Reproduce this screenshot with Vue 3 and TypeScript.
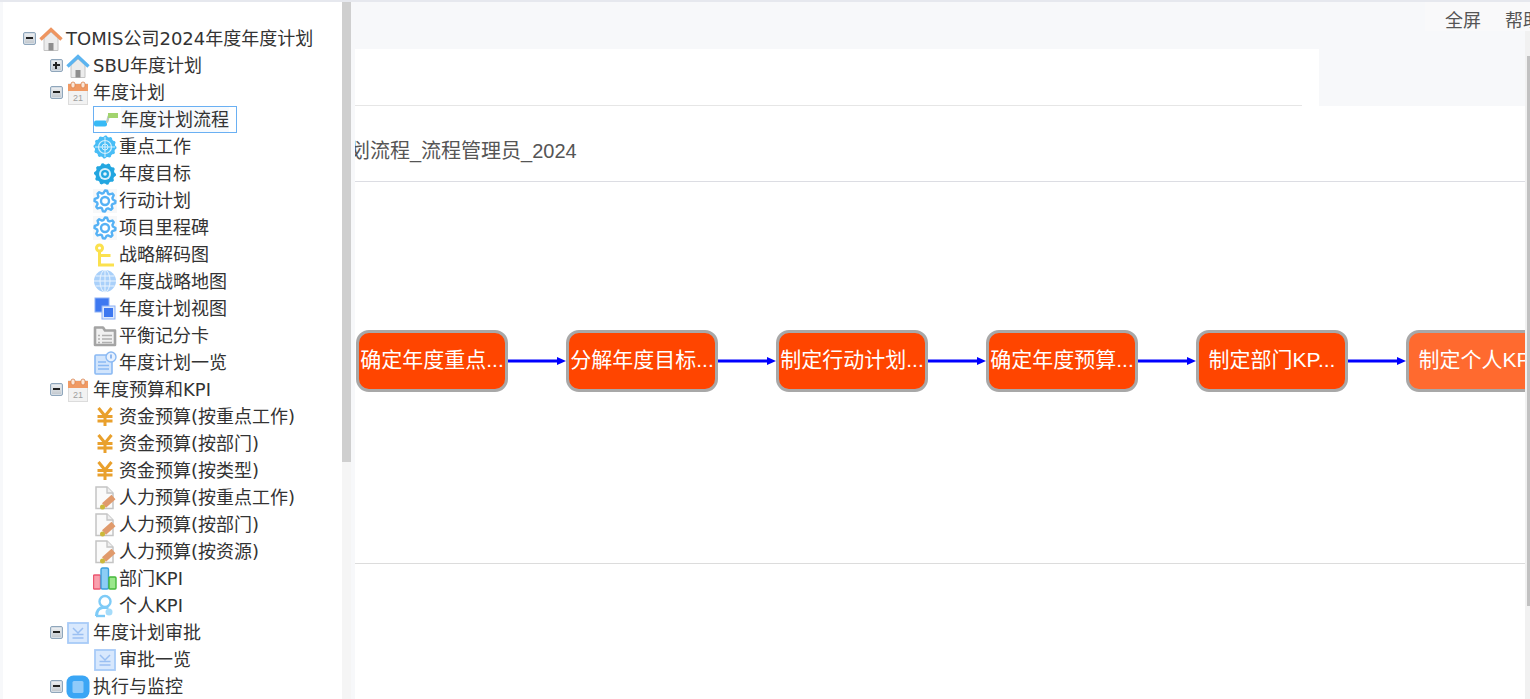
<template>
  <div class="page">
    <svg class="defs" aria-hidden="true">
      <symbol id="i-home-o" viewBox="0 0 24 24">
        <path d="M5 11v12.500h14V11L12 5z" fill="#ececec" stroke="#c4c4c4" />
        <path d="M9.500 23.500v-7.500h5v7.500z" fill="#8e8e8e" />
        <path d="M1.500 12.500 12 2.500l10.500 10" fill="none" stroke="#ee9560" stroke-width="3.400" />
      </symbol>
      <symbol id="i-home-b" viewBox="0 0 24 24">
        <path d="M5 11v12.500h14V11L12 5z" fill="#ececec" stroke="#c4c4c4" />
        <path d="M9.500 23.500v-7.500h5v7.500z" fill="#8e8e8e" />
        <path d="M1.500 12.500 12 2.500l10.500 10" fill="none" stroke="#5cb4f0" stroke-width="3.400" />
      </symbol>
      <symbol id="i-cal" viewBox="0 0 24 24">
        <rect x="2.500" y="3" width="19" height="20.500" fill="#f2f2f2" stroke="#dcdcdc" />
        <rect x="2" y="3" width="20" height="7" fill="#f09a64" />
        <rect x="5" y="1" width="4" height="6" rx="2" fill="#fbe6d8" stroke="#d9834e" stroke-width=".8" />
        <rect x="15" y="1" width="4" height="6" rx="2" fill="#fbe6d8" stroke="#d9834e" stroke-width=".8" />
        <text x="12" y="20" text-anchor="middle" font-size="9" font-family="Liberation Sans" fill="#a0a0a0">21</text>
      </symbol>
      <symbol id="i-flow" viewBox="0 0 24 24">
        <rect x="0" y="12.500" width="13" height="6" rx="2" fill="#38baf5" />
        <path d="M12 14c3 0 1-6.500 4-6.500" fill="none" stroke="#b8c8c0" stroke-width="2.400" />
        <rect x="14" y="5" width="10" height="5" fill="#a2d46e" />
      </symbol>
      <symbol id="i-world" viewBox="0 0 24 24">
        <path :d="gearPath(12, 12, 11.500, 10.300, 12)" fill="#48bdf6" />
        <circle cx="12" cy="12" r="6.500" fill="none" stroke="#d6f0fd" stroke-width="1.200" />
        <circle cx="12" cy="12" r="3" fill="none" stroke="#d6f0fd" stroke-width="1" />
        <path d="M12 2v20M2 12h20" stroke="#d6f0fd" stroke-width="1" />
      </symbol>
      <symbol id="i-target" viewBox="0 0 24 24">
        <path :d="gearPath(12, 12, 11, 9.500, 10)" fill="#22a6e0" />
        <circle cx="12" cy="12" r="6" fill="#d8f0fb" />
        <circle cx="12" cy="12" r="4" fill="#22a6e0" />
        <circle cx="12" cy="12" r="1.800" fill="#e6f6fd" />
      </symbol>
      <symbol id="i-gear" viewBox="0 0 24 24">
        <rect width="24" height="24" fill="#f7f8f9" />
        <path :d="gearPath(12, 12, 10.500, 8, 8)" fill="#fff" stroke="#56b2f5" stroke-width="2.400" stroke-linejoin="round" />
        <circle cx="12" cy="12" r="4" fill="#fff" stroke="#56b2f5" stroke-width="2.400" />
      </symbol>
      <symbol id="i-key" viewBox="0 0 24 24">
        <circle cx="6.500" cy="5" r="3" fill="#fff" stroke="#fbe14e" stroke-width="3" />
        <path d="M6.500 8v14h14.500M6.500 12.500h11" fill="none" stroke="#fbe14e" stroke-width="3" />
      </symbol>
      <symbol id="i-globe" viewBox="0 0 24 24">
        <circle cx="12" cy="11" r="11" fill="#a9d0fa" />
        <g fill="none" stroke="#eaf4fe" stroke-width="1">
          <ellipse cx="12" cy="11" rx="5" ry="11" />
          <path d="M12 0v22M1 11h22M2.500 6h19M2.500 16h19" />
        </g>
      </symbol>
      <symbol id="i-view" viewBox="0 0 24 24">
        <rect x="2" y="1" width="14" height="14" fill="#3e78f0" stroke="#8cb0f5" />
        <rect x="9" y="9" width="13" height="13" fill="#dce8fc" stroke="#8cb0f5" />
        <rect x="11" y="11" width="9" height="9" fill="#3e78f0" />
      </symbol>
      <symbol id="i-card" viewBox="0 0 24 24">
        <path d="M2 21V3.500h8l2 3h10V21z" fill="#f1f1f1" stroke="#a4a4a4" stroke-width="2.600" stroke-linejoin="round" />
        <path d="M5 11.500h2M9 11.500h10M5 15h2M9 15h10M5 18.500h2M9 18.500h10" stroke="#b0b0b0" stroke-width="1.500" />
      </symbol>
      <symbol id="i-list" viewBox="0 0 24 24">
        <rect x="2" y="4" width="17" height="19" rx="1" fill="#d2e5fc" stroke="#8ab9f3" stroke-width="1.600" />
        <path d="M5 11h8M5 14.500h11M5 18h11" stroke="#8ab9f3" stroke-width="1.400" />
        <circle cx="18" cy="6" r="5" fill="#e7f1fe" stroke="#8ab9f3" stroke-width="1.400" />
        <path d="M18 3.500v4" stroke="#6a9fe8" stroke-width="1.400" />
      </symbol>
      <symbol id="i-yen" viewBox="0 0 24 24">
        <path d="M5.500 3l6.500 8 6.500-8M12 10v11M4.500 11.500h15M4.500 16h15" fill="none" stroke="#e9a02c" stroke-width="3" />
      </symbol>
      <symbol id="i-doc" viewBox="0 0 24 24">
        <path d="M3 1h11l6 6v15.500H3z" fill="#fafafa" stroke="#c4c4c4" stroke-width="1.500" />
        <path d="M14 1v6h6" fill="#eee" stroke="#c4c4c4" stroke-width="1.300" />
        <path d="M11 19.500l9.500-8.500" stroke="#e09a6c" stroke-width="6" />
        <circle cx="9.500" cy="21" r="2.500" fill="#cbb83a" />
      </symbol>
      <symbol id="i-bars" viewBox="0 0 24 24">
        <rect x="0.500" y="8" width="7" height="14" rx="1" fill="#f9a0ae" stroke="#ec5670" stroke-width="1.400" />
        <rect x="8" y="1" width="7.500" height="21" rx="1.500" fill="#8ccdf5" stroke="#3b9fdc" stroke-width="1.400" />
        <rect x="16" y="10" width="7" height="12" rx="1" fill="#9ae78c" stroke="#44b83a" stroke-width="1.400" />
      </symbol>
      <symbol id="i-user" viewBox="0 0 24 24">
        <circle cx="12" cy="7.500" r="5.500" fill="#fff" stroke="#7ecbf7" stroke-width="2.400" />
        <path d="M3.500 22c0-5 3-8 6-8.500h6" fill="none" stroke="#7ecbf7" stroke-width="3.200" />
        <path d="M3 22h9" stroke="#7ecbf7" stroke-width="2.400" />
        <circle cx="16" cy="18" r="3.500" fill="#a6dcfa" />
      </symbol>
      <symbol id="i-check" viewBox="0 0 24 24">
        <rect x="2" y="2" width="20" height="20" fill="#d8e8fd" stroke="#a8cbf8" stroke-width="1.800" />
        <path d="M7 7l5 5 5-5M6.500 13.500h11M6.500 17h11" fill="none" stroke="#9abff2" stroke-width="1.500" />
      </symbol>
      <symbol id="i-watch" viewBox="0 0 24 24">
        <rect x="0.500" y="0.500" width="23" height="23" rx="7" fill="#3aa6f5" />
        <rect x="6.500" y="6" width="11" height="12" rx="1.500" fill="#8fcbfa" />
      </symbol>
    </svg>

    <header class="top">
      <div class="links"><span>全屏</span><span>帮助</span></div>
    </header>
    <div class="card"><div class="card-line"></div></div>

    <main class="body">
      <h2 class="title">年度计划流程_流程管理员_2024</h2>
      <div class="flow">
        <template v-for="(step, i) in steps" :key="step.label">
          <div class="node" :class="{ current: step.current }"><span>{{ step.label }}</span></div>
          <svg v-if="i < steps.length - 1" class="arrow" width="58" height="10" viewBox="0 0 58 10">
            <path d="M0 5h50" stroke="#0000ff" stroke-width="3" />
            <path d="M49 1l9 4-9 4z" fill="#0000ff" />
          </svg>
        </template>
      </div>
    </main>

    <aside class="side">
      <div class="tree">
        <div v-for="row in rows" :key="row.label" class="row" :class="'lv' + row.level">
          <span v-if="row.toggle" class="toggle" :class="row.toggle"></span>
          <span class="item" :class="{ selected: row.selected }">
            <svg class="icon" width="24" height="24"><use :href="'#i-' + row.icon" /></svg>
            <span class="label">{{ row.label }}</span>
          </span>
        </div>
      </div>
      <div class="bar"><div class="thumb"></div></div>
    </aside>

    <div class="page-bar"><div class="page-thumb"></div></div>
  </div>
</template>

<script setup lang="ts">
interface Row {
  label: string;
  icon: string;
  level: number;
  toggle?: 'open' | 'closed';
  selected?: boolean;
}

const rows: Row[] = [
  { label: 'TOMIS公司2024年度年度计划', icon: 'home-o', level: 0, toggle: 'open' },
  { label: 'SBU年度计划', icon: 'home-b', level: 1, toggle: 'closed' },
  { label: '年度计划', icon: 'cal', level: 1, toggle: 'open' },
  { label: '年度计划流程', icon: 'flow', level: 2, selected: true },
  { label: '重点工作', icon: 'world', level: 2 },
  { label: '年度目标', icon: 'target', level: 2 },
  { label: '行动计划', icon: 'gear', level: 2 },
  { label: '项目里程碑', icon: 'gear', level: 2 },
  { label: '战略解码图', icon: 'key', level: 2 },
  { label: '年度战略地图', icon: 'globe', level: 2 },
  { label: '年度计划视图', icon: 'view', level: 2 },
  { label: '平衡记分卡', icon: 'card', level: 2 },
  { label: '年度计划一览', icon: 'list', level: 2 },
  { label: '年度预算和KPI', icon: 'cal', level: 1, toggle: 'open' },
  { label: '资金预算(按重点工作)', icon: 'yen', level: 2 },
  { label: '资金预算(按部门)', icon: 'yen', level: 2 },
  { label: '资金预算(按类型)', icon: 'yen', level: 2 },
  { label: '人力预算(按重点工作)', icon: 'doc', level: 2 },
  { label: '人力预算(按部门)', icon: 'doc', level: 2 },
  { label: '人力预算(按资源)', icon: 'doc', level: 2 },
  { label: '部门KPI', icon: 'bars', level: 2 },
  { label: '个人KPI', icon: 'user', level: 2 },
  { label: '年度计划审批', icon: 'check', level: 1, toggle: 'open' },
  { label: '审批一览', icon: 'check', level: 2 },
  { label: '执行与监控', icon: 'watch', level: 1, toggle: 'open' },
];

const steps = [
  { label: '确定年度重点...' },
  { label: '分解年度目标...' },
  { label: '制定行动计划...' },
  { label: '确定年度预算...' },
  { label: '制定部门KP...' },
  { label: '制定个人KP...', current: true },
];

// 齿轮外形,图标里共用
function gearPath(cx: number, cy: number, outer: number, inner: number, teeth: number): string {
  const step = (Math.PI * 2) / (teeth * 4);
  const pts: string[] = [];
  for (let i = 0; i < teeth * 4; i++) {
    const r = i % 4 === 0 || i % 4 === 1 ? outer : inner;
    const x = cx + r * Math.cos(i * step);
    const y = cy + r * Math.sin(i * step);
    pts.push(x.toFixed(2) + ' ' + y.toFixed(2));
  }
  return 'M' + pts.join('L') + 'Z';
}
</script>

<style>
html,
body {
  margin: 0;
  overflow: hidden;
}
</style>

<style scoped>
.page {
  position: relative;
  height: 699px;
  overflow: hidden;
  background: #f7f8fa;
  border-top: 2px solid #e6e8ee;
  box-sizing: border-box;
  font-family: "Liberation Sans", "Noto Sans CJK SC", sans-serif;
}
.defs {
  position: absolute;
  width: 0;
  height: 0;
}
.top {
  height: 47px;
  display: flex;
  justify-content: flex-end;
}
.links {
  box-sizing: border-box;
  width: 105px;
  height: 29px;
  padding: 6px 0 0 20px;
  display: flex;
  gap: 24px;
  white-space: nowrap;
  overflow: hidden;
  font-size: 18px;
  line-height: 26px;
  color: #555;
  background: #f9f9fa;
}
.card {
  width: 1319px;
  height: 57px;
  background: #fff;
  display: flex;
  align-items: flex-end;
}
.card-line {
  width: 1302px;
  border-bottom: 1px solid #e6e6e6;
}
.body {
  height: 593px;
  background: #fff;
  overflow: hidden;
}
.title {
  margin: 0;
  height: 76px;
  box-sizing: border-box;
  padding: 32px 0 0 290px;
  border-bottom: 1px solid #dcdde3;
  font-size: 20px;
  font-weight: 400;
  line-height: 26px;
  color: #555;
  white-space: nowrap;
}
.flow {
  display: flex;
  align-items: center;
  height: 382px;
  box-sizing: border-box;
  padding: 148px 0 171px 356px;
  border-bottom: 1px solid #dcdcdc;
  width: 1525px;
}
.node {
  flex: none;
  width: 152px;
  height: 62px;
  box-sizing: border-box;
  border: 3px solid #a8a8a8;
  border-radius: 13px;
  background: #ff4500;
  color: #fff;
  font-size: 21px;
  line-height: 54px;
  text-align: center;
  white-space: nowrap;
}
.node span {
  display: block;
  margin: 0 -4px;
}
.node.current {
  background: #ff6a2f;
}
.arrow {
  flex: none;
  display: block;
}
.side {
  position: absolute;
  left: 0;
  top: 0;
  bottom: 0;
  width: 355px;
  box-sizing: border-box;
  padding: 0 4px 0 3px;
  display: flex;
  background: #f7f8fa;
}
.tree {
  width: 339px;
  box-sizing: border-box;
  padding-top: 23px;
  background: #fff;
  overflow: hidden;
  font-family: "DejaVu Sans", "Noto Sans CJK SC", sans-serif;
  font-size: 18px;
  color: #333;
}
.row {
  display: flex;
  align-items: center;
  height: 27px;
  white-space: nowrap;
}
.row.lv0 {
  padding-left: 20px;
}
.row.lv1 {
  padding-left: 47px;
}
.row.lv2 {
  padding-left: 90px;
}
.row.lv2 .icon {
  margin-right: 2px;
}
.row.lv2 .selected .icon {
  margin-right: 3px;
}
.toggle {
  position: relative;
  flex: none;
  width: 11px;
  height: 11px;
  margin-right: 3px;
  border: 1px solid #8fa6bb;
  border-radius: 2px;
  background: linear-gradient(#f0f2f4, #bfc5cb);
  box-shadow: inset 0 0 0 1px #d5dde5;
}
.toggle::before {
  content: "";
  position: absolute;
  left: 2px;
  top: 4px;
  width: 7px;
  height: 2px;
  background: #222;
}
.toggle.closed::after {
  content: "";
  position: absolute;
  left: 4px;
  top: 2px;
  width: 2px;
  height: 7px;
  background: #222;
}
.item {
  display: flex;
  align-items: center;
  height: 27px;
  box-sizing: border-box;
}
.item.selected {
  border: 1px solid #6ab0f3;
  padding-right: 7px;
}
.item.selected .label {
  background: #f7fafd;
}
.icon {
  flex: none;
  display: block;
  margin-right: 3px;
}
.label {
  line-height: 25px;
}
.bar {
  flex: none;
  width: 9px;
  background: #f5f5f5;
}
.thumb {
  height: 460px;
  background: #cfcfcf;
}
.page-bar {
  position: absolute;
  right: 0;
  top: 29px;
  bottom: 0;
  width: 5px;
  background: #f1f1f1;
}
.page-thumb {
  margin-top: 25px;
  margin-left: 2px;
  height: 550px;
  background: #c1c1c1;
}
</style>
